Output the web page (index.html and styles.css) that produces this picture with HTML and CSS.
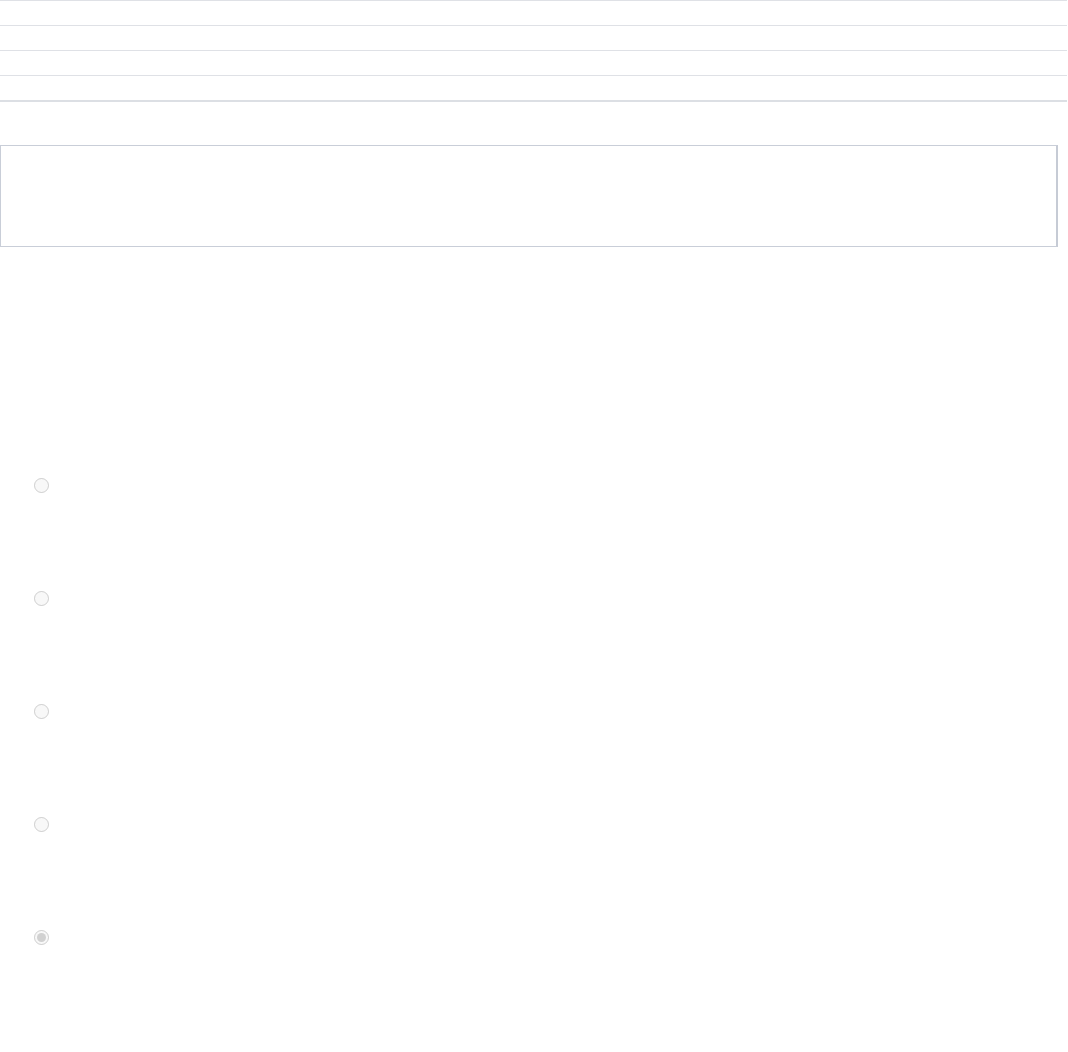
FILE: index.html
```html
<!DOCTYPE html>
<html>
<head>
<meta charset="utf-8">
<link rel="stylesheet" href="styles.css">
</head>
<body>
<div class="table">
  <div class="row"></div>
  <div class="row"></div>
  <div class="row"></div>
  <div class="row last"></div>
</div>
<div class="box"></div>
<div class="options">
  <label class="option"><input type="radio" name="opt" disabled></label>
  <label class="option"><input type="radio" name="opt" disabled></label>
  <label class="option"><input type="radio" name="opt" disabled></label>
  <label class="option"><input type="radio" name="opt" disabled></label>
  <label class="option"><input type="radio" name="opt" disabled checked></label>
</div>
</body>
</html>
```
FILE: styles.css
```css
html, body {
  margin: 0;
  padding: 0;
  background: #ffffff;
  font-family: "Liberation Sans", Arial, sans-serif;
}
.table {
  width: 1067px;
  border-top: 1px solid #dfe1e6;
}
.row {
  height: 24px;
  border-bottom: 1px solid #dfe1e6;
}
.row.last {
  border-bottom: 2px solid #dcdfe4;
}
.box {
  margin-top: 43px;
  width: 1055px;
  height: 100px;
  border: 1px solid #c9ced8;
  border-right: 2px solid #c6cbd5;
}
.options {
  display: flex;
  flex-direction: column;
  gap: 98px;
  margin-top: 231px;
  padding-left: 34px;
}
.option {
  display: block;
  height: 15px;
}
.option input {
  display: block;
  margin: 0;
  width: 15px;
  height: 15px;
}
```
